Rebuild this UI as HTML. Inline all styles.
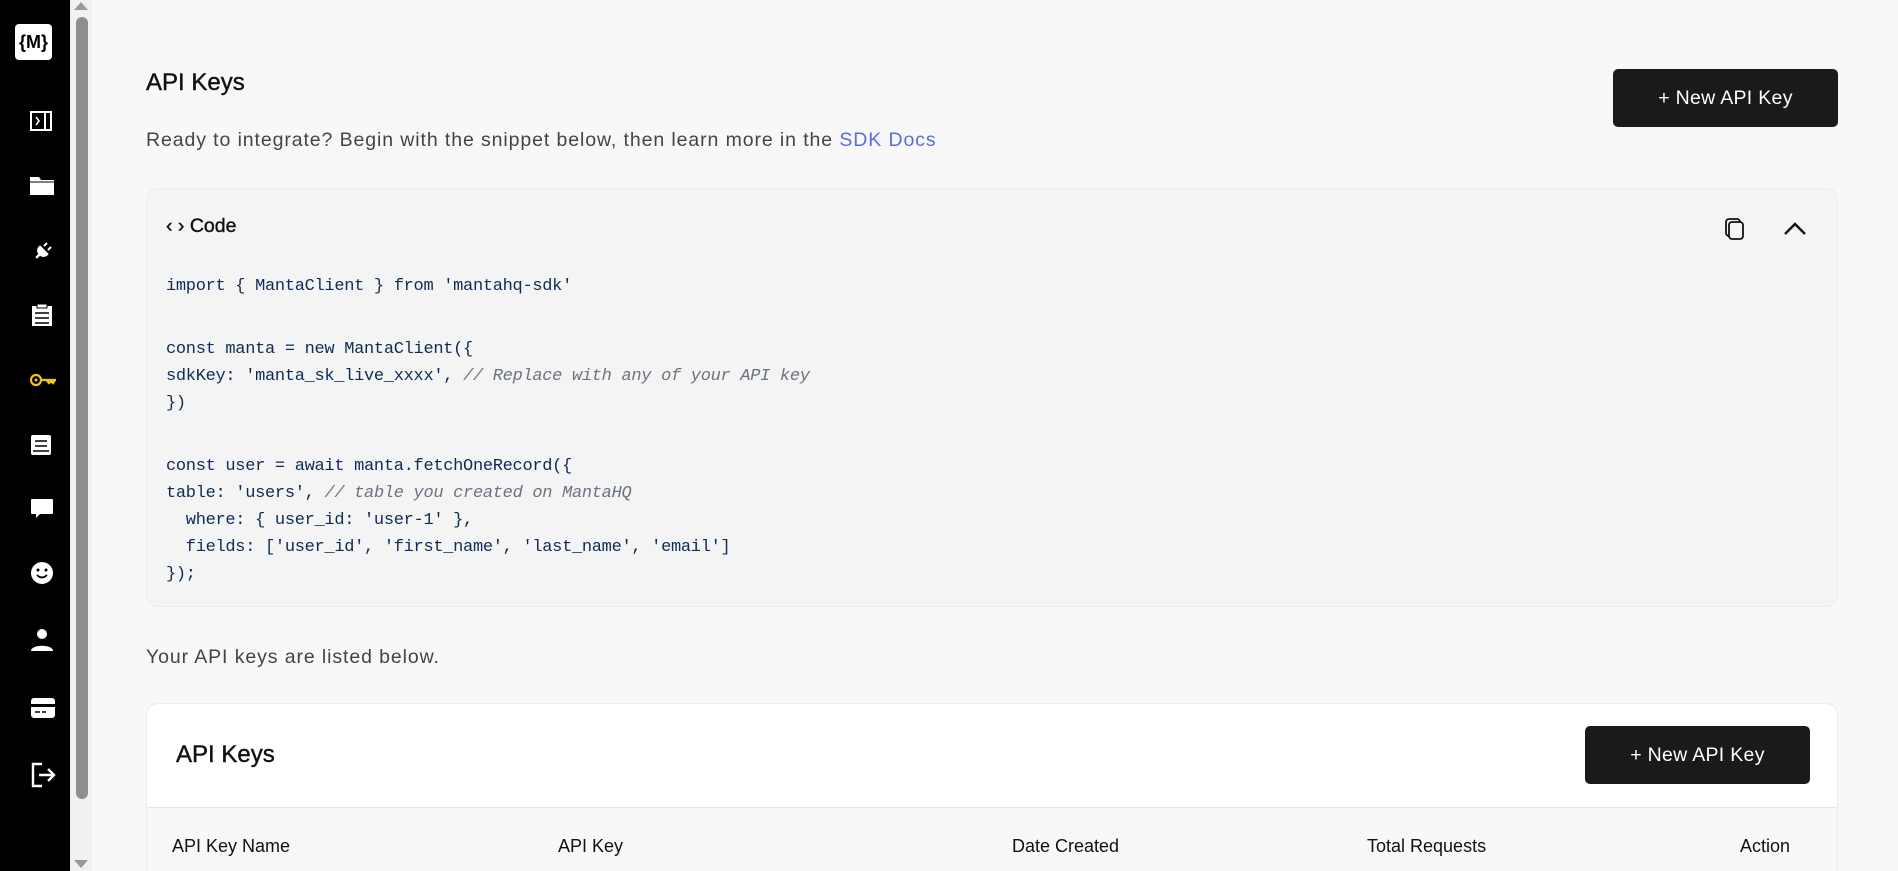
<!DOCTYPE html>
<html style="width:1898px;height:871px;overflow:hidden"><head><meta charset="utf-8"><style>
*{box-sizing:border-box;margin:0;padding:0}
body{width:1898px;height:871px;overflow:hidden;background:#f8f8f8;font-family:"Liberation Sans",sans-serif;position:relative;color:#111}
.side{position:absolute;left:0;top:0;width:70px;height:871px;background:#000}
.side svg{position:absolute;left:30px}
.sb{position:absolute;left:70px;top:0;width:22px;height:871px;background:#f1f1f1}
.thumb{position:absolute;left:76px;top:17px;width:12px;height:782px;background:#8e8e8e;border-radius:6px}
.abs{position:absolute}
.btn{position:absolute;background:#1a1a1a;color:#fff;border-radius:5px;font-size:19.5px;display:flex;align-items:center;justify-content:center;letter-spacing:0.3px}
.code{position:absolute;left:146px;top:188px;width:1692px;height:419px;background:#f4f4f5;border:1px solid #ececec;border-radius:12px}
.pre{position:absolute;left:166px;top:273px;font-family:"Liberation Mono",monospace;font-size:17px;color:#0d2c54;letter-spacing:-0.3px}
.pre div{height:27px;line-height:27px;white-space:pre}
.pre .gap{height:36px}
.pre i{color:#6b7280}
.card{position:absolute;left:146px;top:703px;width:1692px;height:168px;background:#fff;border:1px solid #ececec;border-bottom:none;border-radius:12px 12px 0 0;overflow:hidden}
.th{position:absolute;top:807px;left:147px;width:1690px;height:64px;background:#f7f8fa;border-top:1px solid #e5e7eb}
.th span{position:absolute;top:28px;font-size:18px;color:#111}
.h{-webkit-text-stroke:0.4px #111}
</style></head><body>
<div class="side">
<div class="abs" style="left:15px;top:24px;width:37px;height:36px;background:#fff;border-radius:4px;color:#000;font-weight:bold;font-size:18px;display:flex;align-items:center;justify-content:center">{M}</div>
<svg style="top:111px" width="22" height="20" viewBox="0 0 22 20"><rect x="1" y="1" width="20" height="18" fill="none" stroke="#fff" stroke-width="2"/><line x1="15" y1="1" x2="15" y2="19" stroke="#fff" stroke-width="2"/><path d="M6 6l3 4-3 4" fill="none" stroke="#fff" stroke-width="1.6"/></svg>
<svg style="top:175px" width="24" height="20" viewBox="0 0 24 20"><path d="M0 2h9l2 3h13v15H0z" fill="#fff"/><line x1="0" y1="7" x2="24" y2="7" stroke="#000" stroke-width="1"/></svg>
<svg style="top:240px" width="24" height="24" viewBox="0 0 24 24"><path d="M8 9l7 7M10 6l8 8c-2 3-6 3-8 1l-3 3-1-1 3-3c-2-2-2-6 1-8z" fill="#fff" stroke="#fff"/><path d="M14 6l3-3M18 10l3-3" stroke="#fff" stroke-width="2"/></svg>
<svg style="top:303px" width="24" height="24" viewBox="0 0 24 24"><rect x="2" y="3" width="20" height="20" fill="#fff"/><rect x="7" y="1" width="10" height="4" fill="#fff" stroke="#000"/><path d="M5 10h14M5 15h14M5 20h14" stroke="#000" stroke-width="1.5"/></svg>
<svg style="top:372px" width="26" height="16" viewBox="0 0 26 16"><circle cx="6" cy="8" r="5" fill="none" stroke="#f5c518" stroke-width="2.2"/><circle cx="6" cy="8" r="1.5" fill="#f5c518"/><path d="M11 8h14l-2 3-2-2-2 2-2-2" fill="none" stroke="#f5c518" stroke-width="2.2"/></svg>
<svg style="top:434px" width="22" height="22" viewBox="0 0 22 22"><rect x="1" y="1" width="20" height="20" rx="2" fill="#fff"/><path d="M5 7h12M5 12h12M3 17h16" stroke="#000" stroke-width="1.5"/></svg>
<svg style="top:497px" width="24" height="24" viewBox="0 0 24 24"><path d="M2 2h20a1 1 0 0 1 1 1v13a1 1 0 0 1-1 1H10l-4 4v-4H2a1 1 0 0 1-1-1V3a1 1 0 0 1 1-1z" fill="#fff"/></svg>
<svg style="top:561px" width="24" height="24" viewBox="0 0 24 24"><circle cx="12" cy="12" r="11" fill="#fff"/><circle cx="8" cy="9" r="1.5"/><circle cx="16" cy="9" r="1.5"/><path d="M7 14q5 5 10 0" fill="none" stroke="#000" stroke-width="1.8"/></svg>
<svg style="top:628px" width="24" height="24" viewBox="0 0 24 24"><circle cx="12" cy="6" r="5" fill="#fff"/><path d="M1 23c0-7 22-7 22 0z" fill="#fff"/></svg>
<svg style="top:697px" width="26" height="22" viewBox="0 0 26 22"><rect x="1" y="1" width="24" height="20" rx="3" fill="#fff"/><rect x="1" y="7" width="24" height="3" fill="#000"/><path d="M5 15h5M12 15h4" stroke="#000" stroke-width="1.5"/></svg>
<svg style="top:762px" width="26" height="26" viewBox="0 0 26 26"><path d="M12 2H3v22h9" fill="none" stroke="#fff" stroke-width="2.4"/><path d="M9 13h15M18 7l6 6-6 6" fill="none" stroke="#fff" stroke-width="2.4"/></svg>
</div>
<div class="sb"></div><div class="thumb"></div>
<svg class="abs" style="left:74px;top:2px" width="14" height="8"><path d="M7 0l7 8H0z" fill="#999"/></svg>
<svg class="abs" style="left:74px;top:860px" width="14" height="8"><path d="M0 0h14L7 8z" fill="#999"/></svg>

<div class="abs h" style="left:146px;top:69px;font-size:24px">API Keys</div>
<div class="btn" style="left:1613px;top:69px;width:225px;height:58px">+ New API Key</div>
<div class="abs" style="left:146px;top:129px;font-size:19.5px;color:#444;letter-spacing:0.9px">Ready to integrate? Begin with the snippet below, then learn more in the <span style="color:#5b6ee1">SDK Docs</span></div>

<div class="code"></div>
<div class="abs h" style="left:166px;top:215px;font-size:19.5px">‹ › Code</div>
<svg class="abs" style="left:1724px;top:217px" width="22" height="24" viewBox="0 0 22 24"><rect x="2" y="2" width="14" height="17" rx="3" fill="none" stroke="#111" stroke-width="1.8"/><rect x="5" y="5" width="14" height="17" rx="3" fill="#f4f4f5" stroke="#111" stroke-width="1.8"/></svg>
<svg class="abs" style="left:1783px;top:222px" width="24" height="14" viewBox="0 0 24 14"><path d="M2 12L12 2l10 10" fill="none" stroke="#111" stroke-width="2.4"/></svg>
<div class="pre"><div>import { MantaClient } from 'mantahq-sdk'</div><div class="gap"></div><div>const manta = new MantaClient({</div><div>sdkKey: 'manta_sk_live_xxxx', <i>// Replace with any of your API key</i></div><div>})</div><div class="gap"></div><div>const user = await manta.fetchOneRecord({</div><div>table: 'users', <i>// table you created on MantaHQ</i></div><div>  where: { user_id: 'user-1' },</div><div>  fields: ['user_id', 'first_name', 'last_name', 'email']</div><div>});</div></div>

<div class="abs" style="left:146px;top:646px;font-size:19.5px;color:#444;letter-spacing:0.9px">Your API keys are listed below.</div>
<div class="card"></div>
<div class="abs h" style="left:176px;top:741px;font-size:24px">API Keys</div>
<div class="btn" style="left:1585px;top:726px;width:225px;height:58px">+ New API Key</div>
<div class="th"><span style="left:25px">API Key Name</span><span style="left:411px">API Key</span><span style="left:865px">Date Created</span><span style="left:1220px">Total Requests</span><span style="left:1593px">Action</span></div>
</body></html>
